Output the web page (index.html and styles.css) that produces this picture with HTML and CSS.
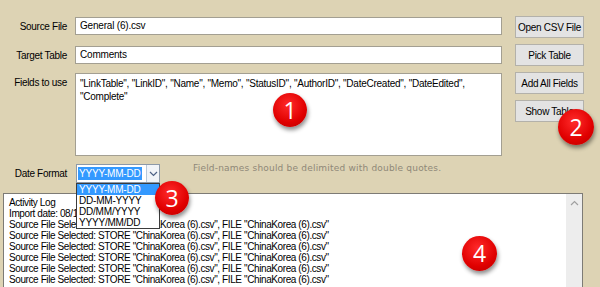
FILE: index.html
```html
<!DOCTYPE html>
<html>
<head>
  <title>CSV Import</title>
  <link rel="stylesheet" href="styles.css">
</head>
<body>
  <div class="window">
    <div class="top">
      <div class="fields">
        <div class="row first">
          <span class="label">Source File</span>
          <div class="textBox">General (6).csv</div>
        </div>
        <div class="row second">
          <span class="label">Target Table</span>
          <div class="textBox">Comments</div>
        </div>
        <div class="row third">
          <span class="label">Fields to use</span>
          <div class="textArea">"LinkTable", "LinkID", "Name", "Memo", "StatusID", "AuthorID", "DateCreated", "DateEdited", "Complete"</div>
        </div>
      </div>
      <div class="buttons">
        <button class="button">Open CSV File</button>
        <button class="button">Pick Table</button>
        <button class="button">Add All Fields</button>
        <button class="button">Show Table</button>
      </div>
    </div>

    <div class="dateRow">
      <span class="label">Date Format</span>
      <div class="select">
        <span class="selectValue"><span class="selected">YYYY-MM-DD</span></span>
        <span class="selectArrow">
          <svg width="9" height="6" viewBox="0 0 9 6"><path d="M1 1 L4.5 4.5 L8 1" fill="none" stroke="#4d6185" stroke-width="1.2"/></svg>
        </span>
        <div class="dropdown">
          <div class="option active">YYYY-MM-DD</div>
          <div class="option">DD-MM-YYYY</div>
          <div class="option">DD/MM/YYYY</div>
          <div class="option">YYYY/MM/DD</div>
        </div>
      </div>
      <span class="hint">Field-names should be delimited with double quotes.</span>
    </div>

    <div class="log">
      <div class="logLines">
        <div>Activity Log</div>
        <div>Import date: 08/12/2014 10:41:12</div>
        <div>Source File Selected: STORE "ChinaKorea (6).csv", FILE "ChinaKorea (6).csv"</div>
        <div>Source File Selected: STORE "ChinaKorea (6).csv", FILE "ChinaKorea (6).csv"</div>
        <div>Source File Selected: STORE "ChinaKorea (6).csv", FILE "ChinaKorea (6).csv"</div>
        <div>Source File Selected: STORE "ChinaKorea (6).csv", FILE "ChinaKorea (6).csv"</div>
        <div>Source File Selected: STORE "ChinaKorea (6).csv", FILE "ChinaKorea (6).csv"</div>
        <div>Source File Selected: STORE "ChinaKorea (6).csv", FILE "ChinaKorea (6).csv"</div>
      </div>
      <div class="scrollbar">
        <svg width="9" height="6" viewBox="0 0 9 6"><path d="M1 5 L4.5 1.5 L8 5" fill="none" stroke="#a0a0a0" stroke-width="1.2"/></svg>
      </div>
    </div>

    <!-- numbered callouts -->
    <span class="badge one">1</span>
    <span class="badge two">2</span>
    <span class="badge three">3</span>
    <span class="badge four">4</span>
  </div>
</body>
</html>
```

FILE: styles.css
```css
* {
  margin: 0;
  box-sizing: border-box;
}

html,
body {
  height: 100%;
  overflow: hidden;
}

body {
  background-color: #ddd3b4;
  font-family: "Liberation Sans", Arial, sans-serif;
  font-size: 10px;
  color: #000;
}

.window {
  position: relative;
  height: 287px;
  overflow: hidden;
}

.top {
  display: flex;
  padding-top: 16px;
}

.fields {
  width: 502px;
  display: flex;
  flex-direction: column;
}

.row {
  display: flex;
  align-items: center;
}

.row.first {
  margin-top: 1px;
}

.row.second {
  margin-top: 11px;
}

.row.third {
  margin-top: 9px;
  align-items: flex-start;
}

.label {
  width: 67px;
  margin-right: 8px;
  text-align: right;
  letter-spacing: -0.3px;
  white-space: nowrap;
}

.row.third .label {
  margin-top: 4px;
}

.textBox {
  width: 427px;
  height: 18px;
  background: #fff;
  border: 1px solid #a39f92;
  padding: 0 4px;
  line-height: 16px;
  letter-spacing: -0.2px;
}

.textArea {
  width: 427px;
  height: 83px;
  background: #fff;
  border: 1px solid #a39f92;
  padding: 3px 4px;
  line-height: 13px;
  letter-spacing: -0.25px;
}

.buttons {
  margin-left: 13px;
  width: 69px;
  display: flex;
  flex-direction: column;
  gap: 6px;
}

.button {
  height: 22px;
  padding: 0;
  background: #e3e3e3;
  border: 1px solid #b3b1aa;
  font-family: inherit;
  font-size: 10px;
  letter-spacing: -0.3px;
  color: #000;
}

/* date format row */
.dateRow {
  display: flex;
  align-items: center;
  margin-top: 8px;
}

.select {
  position: relative;
  width: 84px;
  height: 19px;
  margin-left: 1px;
  display: flex;
  background: #fff;
  border: 1px solid #8c99a8;
}

.selectValue {
  flex: 1;
  padding: 2px 1px;
}

.selected {
  display: inline-block;
  background: #3399ff;
  color: #fff;
  line-height: 13px;
  padding: 0 1px;
  letter-spacing: -0.2px;
}

.selectArrow {
  width: 13px;
  display: flex;
  align-items: center;
  justify-content: center;
  background: #f1f4f8;
  border-left: 1px solid #b8c8da;
}

.dropdown {
  position: absolute;
  top: 18px;
  left: -1px;
  width: 84px;
  background: #fff;
  border: 1px solid #3c3c3c;
  z-index: 2;
}

.option {
  height: 11px;
  line-height: 11px;
  padding-left: 2px;
  letter-spacing: -0.2px;
}

.option.active {
  background: #3399ff;
  color: #fff;
}

.hint {
  align-self: flex-start;
  margin-left: 33px;
  font-family: "DejaVu Sans", Verdana, sans-serif;
  font-size: 9px;
  line-height: 9px;
  letter-spacing: 0.2px;
  color: #8f8878;
}

/* activity log */
.log {
  display: flex;
  margin: 10px 0 0 3px;
  width: 580px;
  height: 110px;
  background: #fff;
  border: 1px solid #7d7b75;
}

.logLines {
  flex: 1;
  padding: 3px 5px;
  line-height: 11px;
  letter-spacing: -0.4px;
}

.scrollbar {
  width: 16px;
  background: #ededed;
  display: flex;
  justify-content: center;
  padding-top: 6px;
}

/* callouts */
.badge {
  position: absolute;
  width: 34px;
  height: 34px;
  border-radius: 50%;
  background: radial-gradient(circle at 45% 35%, #ff2b2b, #e00000 60%, #b40000);
  box-shadow: 1px 3px 4px rgba(0, 0, 0, 0.45);
  color: #fff;
  font-family: "Open Sans", sans-serif;
  font-size: 23px;
  line-height: 34px;
  text-align: center;
  z-index: 3;
}

.badge.one {
  left: 273px;
  top: 93px;
}

.badge.two {
  left: 558px;
  top: 109px;
  width: 36px;
  height: 36px;
  line-height: 36px;
}

.badge.three {
  left: 155px;
  top: 181px;
}

.badge.four {
  left: 462px;
  top: 236px;
  width: 35px;
  height: 35px;
  line-height: 35px;
}
```
